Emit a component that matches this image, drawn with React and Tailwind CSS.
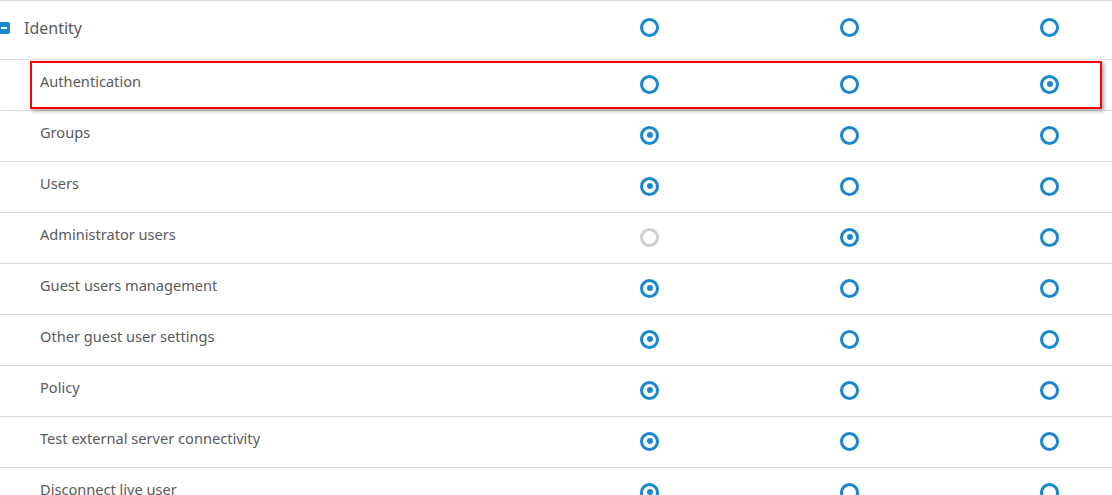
const rows = [
  { label: "Authentication", value: 2, highlight: true },
  { label: "Groups", value: 0 },
  { label: "Users", value: 0 },
  { label: "Administrator users", value: 1, disabled: [0] },
  { label: "Guest users management", value: 0 },
  { label: "Other guest user settings", value: 0 },
  { label: "Policy", value: 0 },
  { label: "Test external server connectivity", value: 0 },
  { label: "Disconnect live user", value: 0 },
];

const Radio = ({ checked, disabled }) => (
  <span
    className={
      "flex items-center justify-center w-[19px] h-[19px] rounded-full border-[3px] " +
      (disabled ? "border-[#d0d0d0]" : "border-[#1a87cf]")
    }
  >
    {checked && <span className="w-[6px] h-[6px] rounded-full bg-[#1a87cf]" />}
  </span>
);

const Cells = ({ value, disabled = [], top }) => (
  <>
    {[0, 1, 2].map((i) => (
      <div key={i} className={"flex items-center pl-[90px]" + (top ? " pb-[5px]" : " pb-[2px]")}>
        <Radio checked={value === i} disabled={disabled.includes(i)} />
      </div>
    ))}
  </>
);

export default function App() {
  return (
    <div
      className="w-[1112px] h-[495px] overflow-hidden bg-white text-[#5a5a5a]"
      style={{ fontFamily: "'Noto Sans', sans-serif" }}
    >
      <div className="grid grid-cols-[550px_200px_200px_1fr] h-[60px] border-t border-b border-[#dedede]">
        <div className="flex items-center gap-[14px] -ml-[2px] pb-[5px]">
          <span className="flex items-center justify-center w-[12px] h-[12px] rounded-[2px] bg-[#1a87cf]">
            <span className="w-[6px] h-[2px] bg-white" />
          </span>
          <span className="text-[16px]">Identity</span>
        </div>
        <Cells value={-1} top />
      </div>
      {rows.map((r) => (
        <div
          key={r.label}
          className="relative grid grid-cols-[550px_200px_200px_1fr] h-[51px] border-b border-[#dedede]"
        >
          {r.highlight && (
            <div className="absolute left-[30px] top-[1px] right-[10px] bottom-[1px] border-2 border-[#ff0000] shadow-[2px_2px_4px_rgba(0,0,0,0.35)] pointer-events-none" />
          )}
          <div className="flex items-center pl-[40px] pb-[7px] text-[14.6px] whitespace-nowrap">{r.label}</div>
          <Cells value={r.value} disabled={r.disabled} />
        </div>
      ))}
    </div>
  );
}
